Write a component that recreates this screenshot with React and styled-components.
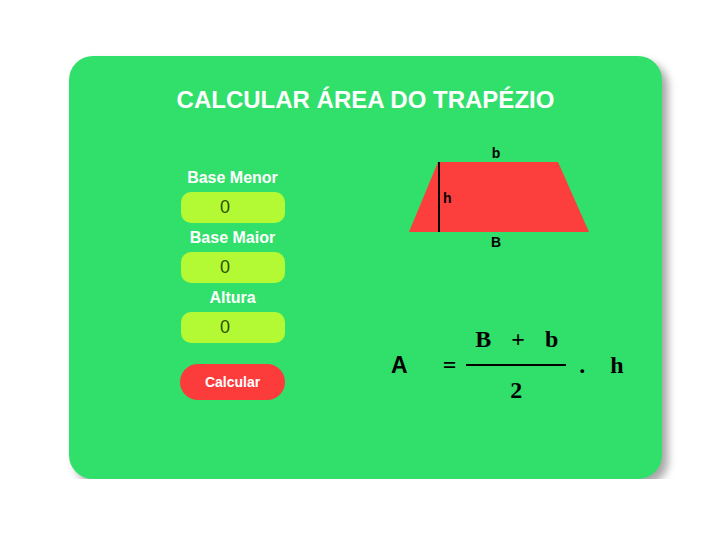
import React from 'react';
import styled, { createGlobalStyle } from 'styled-components';

const GlobalStyle = createGlobalStyle`
    * {
        box-sizing: border-box;
    }
    body {
        margin: 0;
        background-color: #ffffff;
        font-family: "Liberation Sans", Arial, sans-serif;
    }
`;

const Card = styled.div`
    width: 593px;
    height: 423px;
    margin: 56px 0 0 69px;
    padding-top: 31px;
    background-color: #31e06b;
    border-radius: 24px;
    box-shadow: 6px 6px 8px rgba(0, 0, 0, 0.35);
`;

const Title = styled.h1`
    margin: 0;
    font-size: 24px;
    line-height: 26px;
    font-weight: bold;
    color: #ffffff;
    text-align: center;
`;

const Content = styled.div`
    display: flex;
    flex-direction: row;
    align-items: flex-start;
    padding-left: 111px;
    gap: 106px;
`;

const Form = styled.div`
    width: 105px;
    margin-top: 56px;
    display: flex;
    flex-direction: column;
    align-items: center;
    gap: 6px;
`;

const Label = styled.label`
    font-size: 16px;
    line-height: 17px;
    font-weight: bold;
    color: #ffffff;
    white-space: nowrap;
`;

const Input = styled.input`
    width: 104px;
    height: 31px;
    border: none;
    outline: none;
    border-radius: 10px;
    background-color: #b3f934;
    color: #2c5200;
    font-family: "Liberation Sans", Arial, sans-serif;
    font-size: 18px;
    text-align: center;
    padding: 0;
`;

const Button = styled.button`
    width: 105px;
    height: 36px;
    margin-top: 15px;
    border: none;
    border-radius: 18px;
    background-color: #fc3b3b;
    color: #ffffff;
    font-family: "Liberation Sans", Arial, sans-serif;
    font-size: 14px;
    font-weight: bold;
    cursor: pointer;
`;

const Figure = styled.div`
    margin-top: 27px;
    display: flex;
    flex-direction: column;
`;

const Diagram = styled.svg`
    display: block;
    margin-left: 9px;
    font-family: "Liberation Sans", Arial, sans-serif;
    font-size: 14px;
    font-weight: bold;
`;

const Formula = styled.div`
    margin-top: 77px;
    display: flex;
    flex-direction: row;
    align-items: center;
    font-family: "Liberation Serif", "Times New Roman", serif;
    font-weight: bold;
    font-size: 24px;
    line-height: 24px;
    color: #000000;
`;

const AreaSymbol = styled.span`
    font-family: "Liberation Sans", Arial, sans-serif;
    font-size: 23px;
    line-height: 22px;
`;

const Symbol = styled.span`
    margin-left: ${(p) => p.gap || 0}px;
`;

const Fraction = styled.div`
    width: 100px;
    margin-left: ${(p) => p.gap || 0}px;
    display: flex;
    flex-direction: column;
    align-items: center;
`;

const Numerator = styled.div`
    display: flex;
    flex-direction: row;
    gap: 20px;
    margin-left: 1px;
`;

const Bar = styled.div`
    width: 100%;
    height: 2px;
    margin: 13px 0 12px;
    background-color: #000000;
`;

const App = () => {
    return (
        <>
            <GlobalStyle />
            <Card>
                <Title>CALCULAR ÁREA DO TRAPÉZIO</Title>
                <Content>
                    <Form>
                        <Label>Base Menor</Label>
                        <Input type="number" defaultValue="0" />
                        <Label>Base Maior</Label>
                        <Input type="number" defaultValue="0" />
                        <Label>Altura</Label>
                        <Input type="number" defaultValue="0" />
                        <Button>Calcular</Button>
                    </Form>
                    <Figure>
                        <Diagram width="200" height="110" viewBox="0 0 200 110">
                            <polygon points="38,22 158,22 189,92 9,92" fill="#fc3e3c" />
                            <line x1="39" y1="22" x2="39" y2="92" stroke="#000" strokeWidth="2" />
                            <text x="96" y="18" textAnchor="middle">b</text>
                            <text x="43" y="63">h</text>
                            <text x="96" y="107" textAnchor="middle">B</text>
                        </Diagram>
                        <Formula>
                            <AreaSymbol>A</AreaSymbol>
                            <Symbol gap={35}>=</Symbol>
                            <Fraction gap={10}>
                                <Numerator>
                                    <span>B</span>
                                    <span>+</span>
                                    <span>b</span>
                                </Numerator>
                                <Bar />
                                <span>2</span>
                            </Fraction>
                            <Symbol gap={13}>.</Symbol>
                            <Symbol gap={25}>h</Symbol>
                        </Formula>
                    </Figure>
                </Content>
            </Card>
        </>
    );
};

export default App;
